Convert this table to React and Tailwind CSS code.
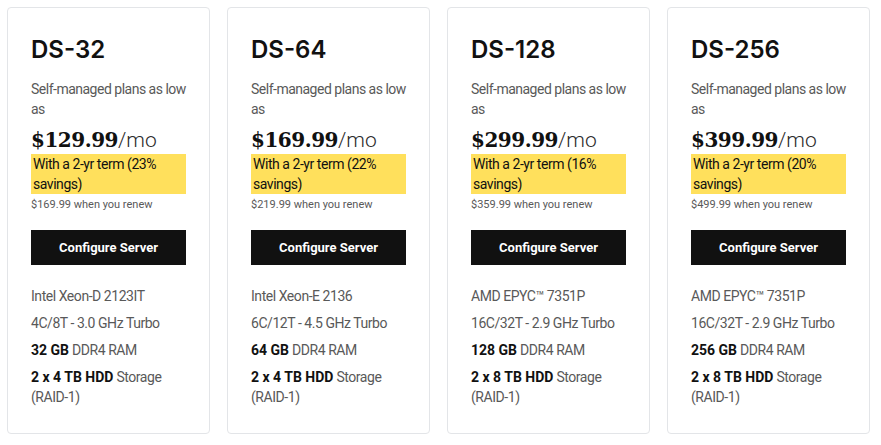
import React from 'react';

const plans = [
  {
    name: 'DS-32',
    price: '$129.99',
    term: 'With a 2-yr term (23% savings)',
    renew: '$169.99 when you renew',
    cpu: 'Intel Xeon-D 2123IT',
    cores: '4C/8T - 3.0 GHz Turbo',
    ram: '32 GB',
    disk: '2 x 4 TB HDD',
  },
  {
    name: 'DS-64',
    price: '$169.99',
    term: 'With a 2-yr term (22% savings)',
    renew: '$219.99 when you renew',
    cpu: 'Intel Xeon-E 2136',
    cores: '6C/12T - 4.5 GHz Turbo',
    ram: '64 GB',
    disk: '2 x 4 TB HDD',
  },
  {
    name: 'DS-128',
    price: '$299.99',
    term: 'With a 2-yr term (16% savings)',
    renew: '$359.99 when you renew',
    cpu: 'AMD EPYC™ 7351P',
    cores: '16C/32T - 2.9 GHz Turbo',
    ram: '128 GB',
    disk: '2 x 8 TB HDD',
  },
  {
    name: 'DS-256',
    price: '$399.99',
    term: 'With a 2-yr term (20% savings)',
    renew: '$499.99 when you renew',
    cpu: 'AMD EPYC™ 7351P',
    cores: '16C/32T - 2.9 GHz Turbo',
    ram: '256 GB',
    disk: '2 x 8 TB HDD',
  },
];

const PlanCard = ({ plan }) => (
  <div className="w-[203px] h-[427px] shrink-0 rounded-[4px] border border-[#e3e5e8] bg-white px-[23px] pt-[26px]">
    {/* Titulo */}
    <h3 className="text-[24px] leading-[32px] font-semibold text-[#111] font-['Inter',sans-serif]">{plan.name}</h3>
    <p className="mt-[13px] text-[14px] leading-[20px] tracking-[-0.5px] text-[#595959] whitespace-nowrap">
      Self-managed plans as low
      <br />
      as
    </p>

    {/* Precio */}
    <div className="mt-[8px] h-[27px] flex items-baseline leading-[27px]">
      <span className="text-[20px] font-bold text-[#111] font-['DejaVu_Serif',serif] tracking-[-0.5px]">{plan.price}</span>
      <span className="text-[21px] font-light text-[#2b2b2b]">/mo</span>
    </div>
    <div className="bg-[#ffe05c] px-[2px] text-[14px] leading-[20px] tracking-[-0.45px] text-[#111]">{plan.term}</div>
    <p className="mt-[3px] text-[11px] leading-[16px] text-[#595959]">{plan.renew}</p>

    <button className="mt-[17px] w-full h-[35px] bg-[#111] text-white text-[13px] font-bold">
      Configure Server
    </button>

    {/* Especificaciones */}
    <ul className="mt-[21px] flex flex-col gap-[7px] text-[14px] leading-[20px] tracking-[-0.45px] text-[#595959]">
      <li>{plan.cpu}</li>
      <li>{plan.cores}</li>
      <li><span className="font-bold tracking-normal text-[#111]">{plan.ram}</span> DDR4 RAM</li>
      <li>
        <span className="font-bold tracking-normal text-[#111]">{plan.disk}</span> Storage
        <span className="block">(RAID-1)</span>
      </li>
    </ul>
  </div>
);

export default function App() {
  return (
    <div className="w-[881px] h-[445px] bg-white p-[7px] flex gap-[17px] font-['Roboto',sans-serif] overflow-hidden">
      {plans.map((p) => (
        <PlanCard key={p.name} plan={p} />
      ))}
    </div>
  );
}
